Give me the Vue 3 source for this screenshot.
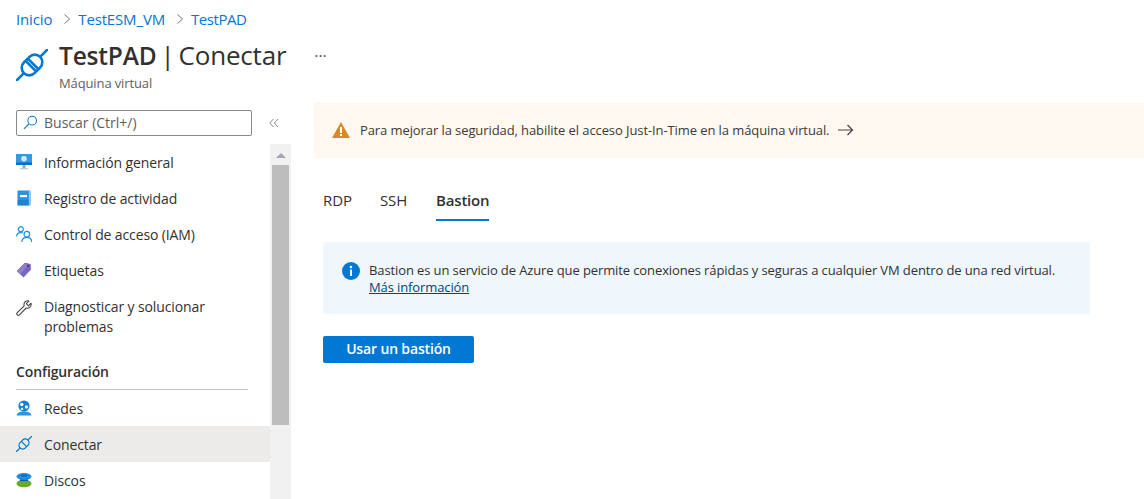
<script setup>
const tabs = [
  { name: 'RDP', active: false },
  { name: 'SSH', active: false },
  { name: 'Bastion', active: true },
]
</script>

<template>
  <div class="page">
    <nav class="crumbs">
      <a>Inicio</a>
      <svg class="chev" viewBox="0 0 8 12" width="8" height="12"><path d="M1.5 1.5 6.5 6l-5 4.5" fill="none" stroke="#777" stroke-width="1"/></svg>
      <a>TestESM_VM</a>
      <svg class="chev" viewBox="0 0 8 12" width="8" height="12"><path d="M1.5 1.5 6.5 6l-5 4.5" fill="none" stroke="#777" stroke-width="1"/></svg>
      <a class="last">TestPAD</a>
    </nav>

    <header class="head">
      <svg class="plug" viewBox="0 0 32 32" width="32" height="32">
        <g transform="rotate(-45 16 16)" fill="none" stroke="#0078d4" stroke-width="2.6">
          <rect x="4.5" y="8.5" width="23" height="15" rx="7.5"/>
          <path d="M14.4 8.500V23.500M17.600 8.500V23.500"/>
          <path d="M-6.500 16H4.500M27.500 16H38.500"/>
        </g>
      </svg>
      <div class="titles">
        <h1><b>TestPAD</b> | Conectar</h1>
        <p>Máquina virtual</p>
      </div>
      <span class="more">···</span>
    </header>

    <div class="body">
      <aside class="side">
        <div class="search-row">
          <div class="search">
            <svg viewBox="0 0 16 16" width="15" height="15"><circle cx="9.800" cy="6" r="4.600" fill="none" stroke="#0078d4" stroke-width="1.100"/><path d="M6.400 9.400 1 14.800" stroke="#0078d4" stroke-width="1.200"/></svg>
            <span>Buscar (Ctrl+/)</span>
          </div>
          <svg class="collapse" viewBox="0 0 10 10" width="10" height="10"><path d="M4.500 1 .8 5l3.700 4M9 1 5.300 5 9 9" fill="none" stroke="#8a8886" stroke-width="1"/></svg>
        </div>
        <div class="menu-wrap">
          <ul class="menu">
            <li>
              <svg viewBox="0 0 16 16" width="16" height="16"><rect x="0" y="0" width="16" height="10.500" fill="#2f9ae8"/><rect y="8.500" width="16" height="2.500" fill="#0a6fc0"/><circle cx="8" cy="4.800" r="2.800" fill="#cfe9fb"/><rect x="6.500" y="11" width="3" height="3" fill="#a9a4ac"/><rect x="4" y="14" width="8" height="1.400" fill="#c8ccd0"/></svg>
              <span>Información general</span>
            </li>
            <li>
              <svg viewBox="0 0 16 16" width="16" height="16"><rect x="1.500" y="0.500" width="13" height="15" rx="1" fill="#2a92e2"/><rect x="12.800" y="0.500" width="1.700" height="15" fill="#8ccbf4"/><rect x="4" y="5" width="7" height="2.200" fill="#fff"/><rect x="1.500" y="10" width="11.300" height="5.500" fill="#1877c4" opacity=".55"/></svg>
              <span>Registro de actividad</span>
            </li>
            <li>
              <svg viewBox="0 0 16 16" width="16" height="16" fill="none" stroke="#1f8de0" stroke-width="1.200"><circle cx="4.800" cy="3.200" r="2.500"/><path d="M.6 10.500C.8 7.800 2.400 6.600 4.800 6.600c.8 0 1.500.1 2 .4"/><circle cx="10.800" cy="8.200" r="2.800"/><path d="M5.800 16c.2-3 2-4.600 5-4.600s4.800 1.600 5 4.600"/></svg>
              <span>Control de acceso (IAM)</span>
            </li>
            <li>
              <svg viewBox="0 0 16 16" width="16" height="16"><path d="M9 .8 14.600 2 15 7.500 7.500 15.600.8 9Z" fill="#7a67bd"/><path d="M8.500 1 .8 9l3.400 3.300L12 3.600Z" fill="#8f7fcc"/><circle cx="12" cy="4" r="1.100" fill="#3c3470"/></svg>
              <span>Etiquetas</span>
            </li>
            <li class="tall">
              <svg viewBox="0 0 16 16" width="16" height="16" fill="none" stroke="#444" stroke-width="1.100" stroke-linejoin="round"><path d="M15 3.200 12.400 5.800 10.300 3.700 12.900 1.100C10.700.3 8.200 1.200 8 4c-.1.700 0 1.300.2 1.900L1.300 12.700a1.500 1.500 0 0 0 2.100 2.200L10.200 8c2.800.8 5.700-1.600 4.800-4.800Z"/></svg>
              <span>Diagnosticar y solucionar problemas</span>
            </li>
            <li class="group">Configuración</li>
            <li>
              <svg viewBox="0 0 16 16" width="16" height="16"><path d="M.5 15.500c.7-3 3-4 7.500-4s6.800 1 7.500 4Z" fill="#2a97e6"/><circle cx="8" cy="6" r="5.600" fill="#1a7fcc"/><circle cx="5.800" cy="4.500" r="1.700" fill="#fff"/><circle cx="10.500" cy="7" r="1.700" fill="#e6f3fc"/><circle cx="6" cy="9" r="1.300" fill="#cfe9fb"/></svg>
              <span>Redes</span>
            </li>
            <li class="on">
              <svg viewBox="0 0 32 32" width="16" height="16">
                <g transform="rotate(-45 16 16)" fill="none" stroke="#0078d4" stroke-width="2.600">
                  <rect x="5" y="8.500" width="22" height="15" rx="7.500"/>
                  <path d="M16 8.500V23.500"/>
                  <path d="M-6.500 16H5M27 16H38.500"/>
                </g>
              </svg>
              <span>Conectar</span>
            </li>
            <li>
              <svg viewBox="0 0 16 16" width="16" height="16"><ellipse cx="8" cy="11.500" rx="7.500" ry="3.800" fill="#66ab2e"/><rect x="4" y="4" width="8" height="5" fill="#0f5fa3"/><ellipse cx="8" cy="4.500" rx="7.500" ry="3.500" fill="#1f8de0"/><ellipse cx="8" cy="3.500" rx="3.500" ry="1.200" fill="#0f6cb8"/></svg>
              <span>Discos</span>
            </li>
          </ul>
          <div class="bar">
            <div class="arrow"></div>
            <div class="thumb"></div>
          </div>
        </div>
      </aside>

      <main class="main">
        <div class="warn">
          <svg viewBox="0 0 18 16" width="18" height="16"><path d="M9 0 18 16H0Z" fill="#d68a29"/><rect x="8" y="5" width="2" height="6" fill="#fff"/><rect x="8" y="12" width="2" height="2" fill="#fff"/></svg>
          <span>Para mejorar la seguridad, habilite el acceso Just-In-Time en la máquina virtual.</span>
          <svg viewBox="0 0 16 12" width="16" height="12"><path d="M0 6H14.500M9.500 1 14.500 6l-5 5" fill="none" stroke="#444" stroke-width="1.200"/></svg>
        </div>

        <div class="tabs">
          <span v-for="t in tabs" :key="t.name" class="tab" :class="{ active: t.active }">{{ t.name }}</span>
        </div>

        <div class="info">
          <svg viewBox="0 0 18 18" width="18" height="18"><circle cx="9" cy="9" r="9" fill="#0078d4"/><rect x="8" y="7.500" width="2" height="6.500" fill="#fff"/><circle cx="9" cy="5" r="1.300" fill="#fff"/></svg>
          <p>Bastion es un servicio de Azure que permite conexiones rápidas y seguras a cualquier VM dentro de una red virtual.<br><a>Más información</a></p>
        </div>

        <button class="primary"><span>Usar un bastión</span></button>
      </main>
    </div>
  </div>
</template>

<style>
body { margin: 0; }
</style>

<style scoped>
.page {
  width: 1144px;
  height: 499px;
  overflow: hidden;
  background: #fff;
  color: #323130;
  font-family: "Open Sans", "Noto Sans", sans-serif;
  font-size: 14px;
  letter-spacing: -0.12px;
}
.crumbs {
  display: flex;
  align-items: center;
  height: 18px;
  padding: 10px 0 0 16px;
  font-size: 15px;
  letter-spacing: -0.15px;
  color: #0078d4;
}
.crumbs .last { letter-spacing: -0.45px; }
.chev { margin: 0 7px 0 11px; }
.head {
  display: flex;
  align-items: flex-start;
  height: 72px;
}
.plug { margin: 21px 0 0 16px; }
.titles { margin: 9px 0 0 11px; }
h1 {
  margin: 0;
  font-size: 26px;
  font-weight: 400;
  line-height: 36px;
  letter-spacing: -0.2px;
  word-spacing: -2.500px;
  color: #323130;
}
h1 b { font-weight: 600; font-size: 24.500px; }
.titles p {
  margin: 1px 0 0;
  font-size: 13px;
  line-height: 16px;
  color: #605e5c;
}
.more {
  margin: 17px 0 0 28px;
  font-size: 16px;
  color: #555;
}
.body { display: flex; }
.side { width: 291px; flex: none; }
.search-row {
  display: flex;
  align-items: center;
  height: 26px;
  padding: 10px 0 8px 16px;
}
.search {
  box-sizing: border-box;
  width: 236px;
  height: 26px;
  display: flex;
  align-items: center;
  gap: 6px;
  padding: 0 0 1px 6px;
  border: 1px solid #8a8886;
  border-radius: 2px;
  color: #605e5c;
  letter-spacing: 0;
}
.collapse { margin-left: 17px; }
.menu-wrap { display: flex; height: 355px; overflow: hidden; }
.menu {
  list-style: none;
  margin: 0;
  padding: 0;
  width: 270px;
  flex: none;
}
.menu li {
  box-sizing: border-box;
  display: flex;
  align-items: center;
  gap: 12px;
  height: 36px;
  padding: 0 0 0 16px;
}
.menu li svg { flex: none; }
.menu li.tall {
  height: 56px;
  line-height: 20px;
  padding-top: 2px;
}
.menu li.tall span { width: 190px; }
.menu li.tall svg { align-self: flex-start; margin-top: 10px; }
.menu li.group {
  display: block;
  height: 46px;
  width: 232px;
  padding: 18px 0 0;
  margin-left: 16px;
  line-height: 20px;
  font-weight: 600;
  border-bottom: 1px solid #c8c6c4;
}
.menu li.on { background: #edebe9; }
.bar {
  width: 21px;
  background: #f1f1f1;
  flex: none;
}
.arrow {
  width: 0;
  margin: 9px auto 7px;
  border: 5px solid transparent;
  border-top: 0;
  border-bottom: 5px solid #a5a3b5;
}
.thumb {
  width: 17px;
  margin-left: 2px;
  height: 260px;
  background: #bdbdbd;
}
.main {
  flex: 1;
  padding: 2px 0 0 23px;
  min-width: 0;
}
.warn {
  display: flex;
  align-items: center;
  gap: 10px;
  height: 56px;
  padding-left: 18px;
  background: #fff8f0;
}
.warn span { font-size: 13px; letter-spacing: -0.09px; color: #3b3a39; margin-right: -1px; }
.tabs {
  display: flex;
  gap: 28px;
  height: 36px;
  margin: 30px 0 0 9px;
  font-size: 15px;
  line-height: 22px;
  letter-spacing: -0.1px;
}
.tab { box-sizing: border-box; height: 33px; padding-top: 1px; }
.tab.active {
  font-weight: 600;
  border-bottom: 2px solid #0078d4;
  letter-spacing: -0.2px;
  margin-left: 1px;
}
.info {
  display: flex;
  gap: 9px;
  box-sizing: border-box;
  width: 767px;
  height: 72px;
  margin: 18px 0 0 9px;
  padding: 20px 19px;
  background: #eff6fc;
  border-radius: 2px;
}
.info svg { flex: none; }
.info p {
  margin: 0;
  font-size: 13px;
  letter-spacing: -0.11px;
  line-height: 17px;
  color: #323130;
  white-space: nowrap;
}
.info a { color: #004578; text-decoration: underline; }
.primary {
  display: block;
  width: 151px;
  height: 27px;
  margin: 22px 0 0 9px;
  padding: 0 0 2px;
  border: 0;
  border-radius: 2px;
  background: #0078d4;
  color: #fff;
  font-family: inherit;
  font-size: 14px;
  font-weight: 600;
  letter-spacing: -0.15px;
}
</style>
